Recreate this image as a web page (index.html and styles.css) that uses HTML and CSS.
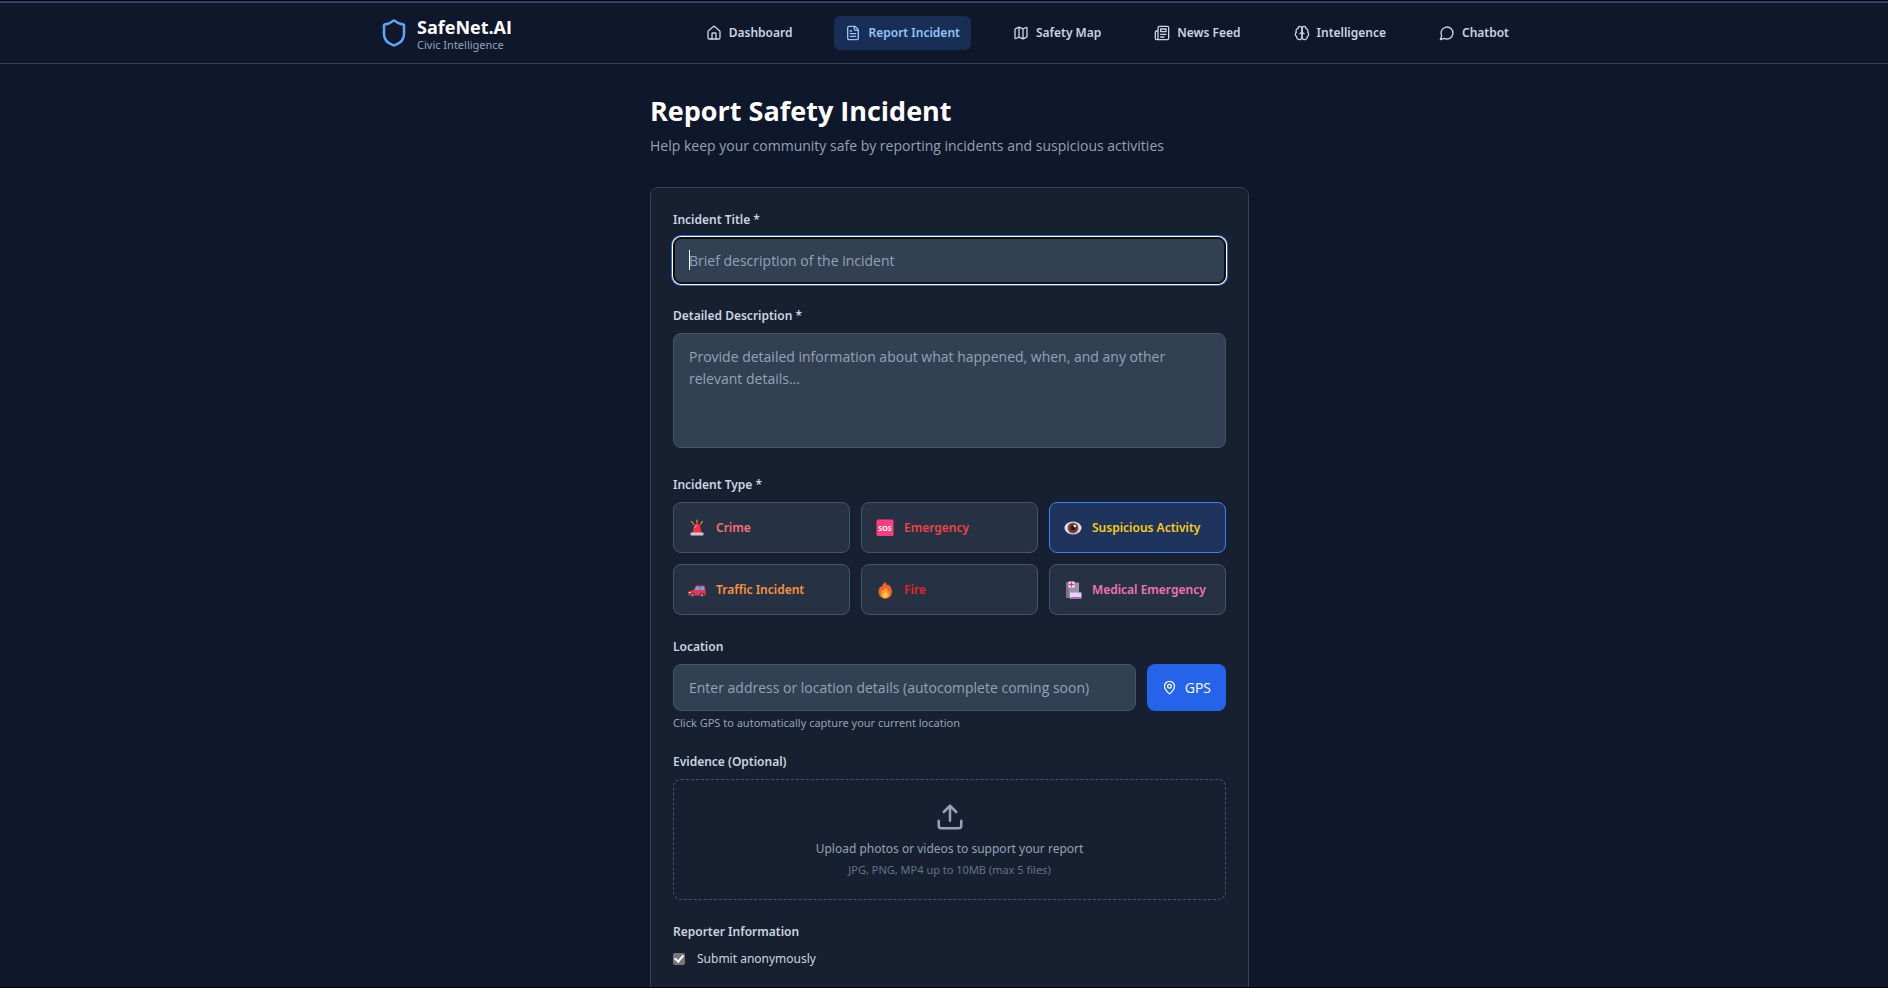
FILE: index.html
```html
<!DOCTYPE html>
<html lang="en">
<head>
<meta charset="utf-8">
<title>SafeNet.AI - Report Incident</title>
<link rel="stylesheet" href="styles.css">
</head>
<body>
<header class="topbar">
  <div class="topbar-inner">
    <a class="brand" href="#">
      <svg class="brand-icon" viewBox="0 0 24 24"><path d="M20 13c0 5-3.5 7.500-7.660 8.950a1 1 0 0 1-.67-.01C7.500 20.500 4 18 4 13V6a1 1 0 0 1 1-1c2 0 4.500-1.200 6.240-2.720a1.170 1.170 0 0 1 1.520 0C14.510 3.810 17 5 19 5a1 1 0 0 1 1 1z"/></svg>
      <span class="brand-text">
        <span class="brand-name">SafeNet.AI</span>
        <span class="brand-tag">Civic Intelligence</span>
      </span>
    </a>
    <nav class="nav">
      <a class="nav-link" href="#"><svg viewBox="0 0 24 24"><path d="M15 21v-8a1 1 0 0 0-1-1h-4a1 1 0 0 0-1 1v8"/><path d="M3 10a2 2 0 0 1 .709-1.528l7-5.999a2 2 0 0 1 2.582 0l7 5.999A2 2 0 0 1 21 10v9a2 2 0 0 1-2 2H5a2 2 0 0 1-2-2z"/></svg>Dashboard</a>
      <a class="nav-link active" href="#"><svg viewBox="0 0 24 24"><path d="M15 2H6a2 2 0 0 0-2 2v16a2 2 0 0 0 2 2h12a2 2 0 0 0 2-2V7Z"/><path d="M14 2v4a2 2 0 0 0 2 2h4M10 9H8M16 13H8M16 17H8"/></svg>Report Incident</a>
      <a class="nav-link" href="#"><svg viewBox="0 0 24 24"><path d="M14.106 5.553a2 2 0 0 0 1.788 0l3.659-1.830A1 1 0 0 1 21 4.619v12.764a1 1 0 0 1-.553.894l-4.553 2.277a2 2 0 0 1-1.788 0l-4.212-2.106a2 2 0 0 0-1.788 0l-3.659 1.830A1 1 0 0 1 3 19.381V6.618a1 1 0 0 1 .553-.894l4.553-2.277a2 2 0 0 1 1.788 0zM15 5.764v15M9 3.236v15"/></svg>Safety Map</a>
      <a class="nav-link" href="#"><svg viewBox="0 0 24 24"><path d="M4 22h16a2 2 0 0 0 2-2V4a2 2 0 0 0-2-2H8a2 2 0 0 0-2 2v16a2 2 0 0 1-2 2Zm0 0a2 2 0 0 1-2-2v-9c0-1.100.9-2 2-2h2M18 14h-8M15 18h-5M10 6h8v4h-8V6Z"/></svg>News Feed</a>
      <a class="nav-link" href="#"><svg viewBox="0 0 24 24"><path d="M12 5a3 3 0 1 0-5.997.125 4 4 0 0 0-2.526 5.770 4 4 0 0 0 .556 6.588A4 4 0 1 0 12 18Z"/><path d="M12 5a3 3 0 1 1 5.997.125 4 4 0 0 1 2.526 5.770 4 4 0 0 1-.556 6.588A4 4 0 1 1 12 18Z"/><path d="M15 13a4.500 4.500 0 0 1-3-4 4.500 4.500 0 0 1-3 4"/></svg>Intelligence</a>
      <a class="nav-link" href="#"><svg viewBox="0 0 24 24"><path d="M7.900 20A9 9 0 1 0 4 16.100L2 22Z"/></svg>Chatbot</a>
    </nav>
  </div>
</header>

<main class="content">
  <h1 class="title">Report Safety Incident</h1>
  <p class="subtitle">Help keep your community safe by reporting incidents and suspicious activities</p>

  <form class="card">
    <div class="field">
      <label class="label" for="title">Incident Title *</label>
      <div class="focus-wrap">
        <input class="control focused" id="title" type="text" placeholder="Brief description of the incident">
        <span class="caret"></span>
      </div>
    </div>

    <div class="field field-text">
      <label class="label" for="details">Detailed Description *</label>
      <textarea class="control area" id="details" placeholder="Provide detailed information about what happened, when, and any other relevant details..."></textarea>
    </div>

    <div class="field" role="group" aria-labelledby="type-label">
      <span class="label" id="type-label">Incident Type *</span>
      <div class="types">
        <button type="button" class="type crime">
          <svg viewBox="0 0 18 18"><path d="M3.500 2.500l2 2.500M9 1v3M14.500 2.500l-2 2.500" stroke="#e0a52e" stroke-width="1.200"/><path d="M4.500 14l1.200-6a3.300 3.300 0 0 1 6.600 0l1.200 6z" fill="#f5313f"/><path d="M7 8.500a2 2 0 0 1 1.500-2" stroke="#ff9aa2" stroke-width="1"/><rect x="2.500" y="13.500" width="13" height="3" rx="1" fill="#cdc6e2"/></svg>Crime</button>
        <button type="button" class="type emergency">
          <svg viewBox="0 0 18 18"><rect x=".5" y=".5" width="17" height="16.500" rx="1.500" fill="#fb3f7d"/><text class="sos" x="9" y="11.500">SOS</text></svg>Emergency</button>
        <button type="button" class="type suspicious selected" aria-pressed="true">
          <svg viewBox="0 0 18 18"><ellipse cx="9" cy="9" rx="8.500" ry="6.500" fill="#e9dfe6"/><circle cx="9" cy="9" r="5.500" fill="#8a5048"/><circle cx="9" cy="9" r="4" fill="#6c3434"/><circle cx="9" cy="9" r="2.200" fill="#24161f"/><circle cx="10.800" cy="7" r="1.200" fill="#fff"/></svg>Suspicious Activity</button>
        <button type="button" class="type traffic">
          <svg viewBox="0 0 18 18"><path d="M.5 10.500L5.500 9 8 4.500h8.500L17.500 9v5.500H.5z" fill="#f0324a"/><path d="M6.500 9L8.700 5.500h2.500V9zM12.200 5.500h3.500l.8 3.500h-4.300z" fill="#4ab5f5"/><circle cx="4.500" cy="14" r="2.300" fill="#4a3856"/><circle cx="14" cy="14" r="2.300" fill="#4a3856"/><circle cx="4.500" cy="14" r="1" fill="#b9a9c9"/><circle cx="14" cy="14" r="1" fill="#b9a9c9"/><path d="M1 11.500h1.500" stroke="#ffd08a"/></svg>Traffic Incident</button>
        <button type="button" class="type fire">
          <svg viewBox="0 0 18 18"><path d="M9.500 1c.2 2 1.500 2.400 2.500 3.600l1-.9c1.800 2.300 3 4.500 3 7.300a6.500 6.500 0 0 1-13.500 0c0-2.800 1-4.500 2.500-5.800l.7 1C6.500 3.800 7.500 2 9.500 1z" fill="#f4602c"/><path d="M10 6.500c1 2.500 3.500 3.600 3.500 6.500a4.300 4.300 0 0 1-8.600 0c0-2 .8-3.200 1.800-4.200l1 1.400c.3-1.500.9-2.900 2.300-3.700z" fill="#fd9a32"/><path d="M10 11c.8 1.200 1.600 1.800 1.600 3.200a2.400 2.400 0 0 1-4.800 0c0-1.500 1.800-2 3.200-3.200z" fill="#ffd83d"/></svg>Fire</button>
        <button type="button" class="type medical">
          <svg viewBox="0 0 18 18"><path d="M2 1.500h13V17H2z" fill="#9b8fab"/><path d="M2 1.500h3V17H2z" fill="#7d7190"/><rect x="4.500" y=".5" width="6" height="6" fill="#fbeef7"/><path d="M7.500 1.500v4M5.500 3.500h4" stroke="#ea2f7c" stroke-width="1.400"/><rect x="6" y="11.500" width="11.500" height="6" fill="#e4d4fa"/><path d="M7 16.500h9.500" stroke="#d653c4"/></svg>Medical Emergency</button>
      </div>
    </div>

    <div class="field">
      <label class="label" for="location">Location</label>
      <div class="location">
        <input class="control" id="location" type="text" placeholder="Enter address or location details (autocomplete coming soon)">
        <button type="button" class="gps"><svg viewBox="0 0 24 24"><path d="M20 10c0 4.993-5.539 10.193-7.399 11.799a1 1 0 0 1-1.202 0C9.539 20.193 4 14.993 4 10a8 8 0 0 1 16 0"/><circle cx="12" cy="10" r="3"/></svg>GPS</button>
      </div>
      <p class="hint">Click GPS to automatically capture your current location</p>
    </div>

    <div class="field" role="group" aria-labelledby="evidence-label">
      <span class="label" id="evidence-label">Evidence (Optional)</span>
      <div class="dropzone">
        <svg viewBox="0 0 24 24"><path d="M12 3v12M17 8l-5-5-5 5M21 15v4a2 2 0 0 1-2 2H5a2 2 0 0 1-2-2v-4"/></svg>
        <p class="drop-text">Upload photos or videos to support your report</p>
        <p class="drop-note">JPG, PNG, MP4 up to 10MB (max 5 files)</p>
      </div>
    </div>

    <div class="field" role="group" aria-labelledby="reporter-label">
      <span class="label" id="reporter-label">Reporter Information</span>
      <label class="check" for="anonymous"><input id="anonymous" type="checkbox" checked>Submit anonymously</label>
    </div>
  </form>
</main>
</body>
</html>
```
FILE: styles.css
```css
:root {
  --text-base: 14px;
  --text-sm: 12px;
  --text-xs: 11px;
  --gap: 11px;
  --pad: 22px;
  --font-small: "Noto Sans", "Open Sans", sans-serif;
}

* { box-sizing: border-box; }

body {
  margin: 0;
  height: 100vh;
  overflow: hidden;
  display: flex;
  flex-direction: column;
  background: #0f172a;
  border-bottom: 1px solid #000;
  font-family: "Open Sans", "Noto Sans", sans-serif;
  font-size: var(--text-base);
  line-height: 22px;
  color: #cbd5e1;
}

h1, p { margin: 0; }

svg {
  flex: none;
  fill: none;
  stroke-linecap: round;
  stroke-linejoin: round;
}

button, input, textarea { font: inherit; }

.topbar {
  flex: none;
  height: 64px;
  border-top: 1px solid #02021c;
  border-bottom: 1px solid #334155;
  box-shadow: inset 0 2px #3b3f5c;
}

.topbar-inner {
  max-width: 1152px;
  height: 100%;
  margin: 0 auto;
  padding: 2px 0 0 var(--gap);
  display: flex;
  align-items: center;
  justify-content: space-between;
}

.brand {
  display: flex;
  align-items: center;
  gap: 8px;
  text-decoration: none;
}

.brand-icon { width: 30px; height: 30px; stroke: #60a5fa; stroke-width: 2; }

.brand-text { display: flex; flex-direction: column; padding-top: 2px; }

.brand-name { font-size: 18px; line-height: 20px; font-weight: 700; color: #fff; }

.brand-tag {
  font-family: var(--font-small);
  font-size: var(--text-xs);
  line-height: 15px;
  color: #94a3b8;
}

.nav { display: flex; gap: 31px; }

.nav-link {
  display: flex;
  align-items: center;
  gap: 7px;
  height: 34px;
  padding: 0 11px;
  border-radius: 6px;
  font-family: var(--font-small);
  font-size: var(--text-sm);
  font-weight: 600;
  color: #cbd5e1;
  text-decoration: none;
}

.nav-link svg { width: 16px; height: 16px; stroke: currentColor; stroke-width: 2; }

.nav-link.active { background: #192e55; color: #93c5fd; }

.content {
  width: 100%;
  max-width: 610px;
  margin-left: calc(50% - 305px);
  padding: 30px 0 0 var(--gap);
}

.title { font-size: 27px; line-height: 34px; font-weight: 700; color: #fff; }

.subtitle { margin: 7px 0 30px; color: #94a3b8; }

.card {
  display: flex;
  flex-direction: column;
  gap: var(--pad);
  padding: var(--pad) var(--pad) 120px;
  border: 1px solid #334155;
  border-radius: 8px;
  background: #162030;
}

.field { display: flex; flex-direction: column; }

.field-text { padding-bottom: 5px; }

.label {
  margin-bottom: 8px;
  font-family: var(--font-small);
  font-size: var(--text-sm);
  line-height: 19px;
  font-weight: 600;
  color: #cbd5e1;
}

.control {
  display: block;
  width: 100%;
  height: 47px;
  padding: 12px 15px;
  border: 1px solid #475569;
  border-radius: 8px;
  background: #324053;
  color: #fff;
}

.control::placeholder { color: #94a3b8; opacity: 1; }

.focus-wrap { position: relative; }

.focused {
  border-color: #101010;
  outline: none;
  box-shadow: inset 0 0 0 1px #101010, 0 0 0 1px #fff, 0 0 0 2px #3569c0;
}

.caret {
  position: absolute;
  left: 16px;
  top: 13px;
  width: 1px;
  height: 20px;
  background: #fff;
}

.area { height: 115px; resize: none; }

.types {
  display: grid;
  grid-template-columns: repeat(3, 1fr);
  gap: var(--gap);
}

.type {
  display: flex;
  align-items: center;
  gap: 10px;
  height: 51px;
  padding: 0 14px;
  border: 1px solid #475569;
  border-radius: 8px;
  background: #263244;
  font-family: var(--font-small);
  font-size: var(--text-sm);
  font-weight: 600;
  white-space: nowrap;
}

.type svg { width: 18px; height: 18px; }

.sos {
  font-size: 7px;
  font-weight: 700;
  text-anchor: middle;
  fill: #fff;
}

.type.selected { background: #1f345c; border-color: #3b82f6; }

.crime { color: #f87171; }
.emergency { color: #ef4444; }
.suspicious { color: #facc15; }
.traffic { color: #fb923c; }
.fire { color: #ee2222; }
.medical { color: #f472b6; }

.location { display: flex; gap: var(--gap); }

.location .control { flex: 1; min-width: 0; }

.gps {
  display: flex;
  align-items: center;
  gap: 8px;
  padding: 0 15px;
  border: 0;
  border-radius: 8px;
  background: #2563eb;
  color: #fff;
}

.gps svg { width: 15px; height: 15px; stroke: currentColor; stroke-width: 2; }

.hint {
  margin-top: 4px;
  font-family: var(--font-small);
  font-size: var(--text-xs);
  line-height: 15px;
  color: #94a3b8;
}

.dropzone {
  display: flex;
  flex-direction: column;
  align-items: center;
  padding: var(--pad);
  border: 1px dashed #475569;
  border-radius: 8px;
  font-family: var(--font-small);
}

.dropzone svg { width: 30px; height: 30px; stroke: #94a3b8; stroke-width: 2; }

.drop-text { margin-top: 7px; font-size: var(--text-sm); line-height: 19px; color: #94a3b8; }

.drop-note { margin-top: 4px; font-size: var(--text-xs); line-height: 15px; color: #64748b; }

.check {
  display: flex;
  align-items: center;
  gap: 12px;
  font-family: var(--font-small);
  font-size: var(--text-sm);
  line-height: 19px;
}

.check input {
  appearance: none;
  flex: none;
  width: 12px;
  height: 12px;
  margin: 0;
  border-radius: 2px;
  background: #767676;
  display: grid;
  place-items: center;
}

.check input::before {
  content: "";
  width: 4px;
  height: 7px;
  margin-bottom: 2px;
  border: solid #fff;
  border-width: 0 2px 2px 0;
  transform: rotate(40deg);
}
```
